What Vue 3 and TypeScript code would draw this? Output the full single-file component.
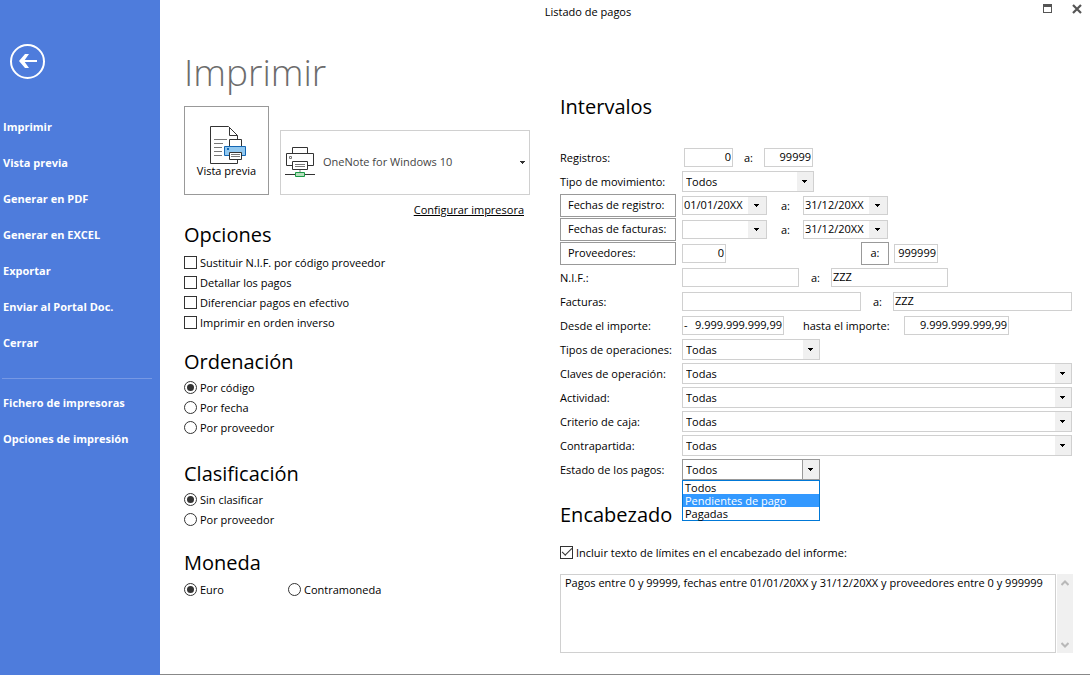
<script setup lang="ts">
import { ref } from 'vue'

interface Choice { id: string; text: string }

const mainLinks: string[] = ['Imprimir', 'Vista previa', 'Generar en PDF', 'Generar en EXCEL', 'Exportar', 'Enviar al Portal Doc.', 'Cerrar']
const setupLinks: string[] = ['Fichero de impresoras', 'Opciones de impresión']

const printOptions: Choice[] = [
  { id: 'nif', text: 'Sustituir N.I.F. por código proveedor' },
  { id: 'detalle', text: 'Detallar los pagos' },
  { id: 'efectivo', text: 'Diferenciar pagos en efectivo' },
  { id: 'inverso', text: 'Imprimir en orden inverso' },
]
const checkedOptions = ref<string[]>([])

const radioGroups = [
  { name: 'orden', title: 'Ordenación', choices: ['Por código', 'Por fecha', 'Por proveedor'] },
  { name: 'clase', title: 'Clasificación', choices: ['Sin clasificar', 'Por proveedor'] },
  { name: 'moneda', title: 'Moneda', choices: ['Euro', 'Contramoneda'] },
]
const picked = ref<Record<string, string>>({ orden: 'Por código', clase: 'Sin clasificar', moneda: 'Euro' })

const wideSelects: Choice[] = [
  { id: 'claves', text: 'Claves de operación:' },
  { id: 'actividad', text: 'Actividad:' },
  { id: 'criterio', text: 'Criterio de caja:' },
  { id: 'contrapartida', text: 'Contrapartida:' },
]

const states: string[] = ['Todos', 'Pendientes de pago', 'Pagadas']
const state = ref('Todos')
const hovered = ref('Pendientes de pago')
const listOpen = ref(true)

// Stepped 5-3-1 pixel triangle shared by every drop-down
const arrow = 'M5 8h5v1H5zM6 9h3v1H6zM7 10h1v1H7z'

function chooseState(value: string): void {
  state.value = value
  listOpen.value = false
}

const includeLimits = ref(true)
const headerText = ref('Pagos entre 0 y 99999, fechas entre 01/01/20XX y 31/12/20XX y proveedores entre 0 y 999999')
</script>

<template>
  <div class="window">
    <aside class="sidebar">
      <button class="back" type="button" aria-label="Volver">
        <svg width="35" height="35" viewBox="0 0 35 35" fill="none" stroke="#fff">
          <circle cx="17.500" cy="17.500" r="16.500" stroke-width="2" />
          <path d="M11 17h16" stroke-width="2" />
          <path d="M9 17l6-7h4l-5 7 5 7h-4z" fill="#fff" stroke="none" />
        </svg>
      </button>
      <nav>
        <a v-for="link in mainLinks" :key="link" href="#">{{ link }}</a>
        <hr />
        <a v-for="link in setupLinks" :key="link" href="#">{{ link }}</a>
      </nav>
    </aside>

    <main class="main">
      <header class="titlebar">
        <span class="caption">Listado de pagos</span>
        <div class="controls">
          <button type="button" aria-label="Maximizar">
            <svg width="9" height="9" viewBox="0 0 9 9" shape-rendering="crispEdges">
              <path d="M0 0h9v9H0zM1 3v5h7V3z" fill="#555" fill-rule="evenodd" />
            </svg>
          </button>
          <button type="button" aria-label="Cerrar ventana">
            <svg width="10" height="10" viewBox="0 0 10 10">
              <path d="M1 1l8 8M9 1L1 9" stroke="#555" stroke-width="2.200" />
            </svg>
          </button>
        </div>
      </header>

      <div class="content">
        <section class="left">
          <h1>Imprimir</h1>
          <div class="printer-row">
            <button class="preview" type="button">
              <svg width="39" height="38" viewBox="-3 0 39 38" fill="none" stroke-width="1">
                <path d="M27.500 13V9.500L18.500 .5H.5v37h27V33" fill="#fff" stroke="#333" />
                <path d="M19.500 1v8.500h8" stroke="#333" />
                <path d="M4 13.500h13M4 17.500h9M4 21.500h8M4 25.500h8M4 29.500h8" stroke="#777" />
                <path d="M19.500 20v-6.500h12V20" fill="#fff" stroke="#333" />
                <path d="M14.500 20.500h21v9h-21z" fill="#91c8f0" stroke="#1467b3" />
                <path d="M17 22h2v2h-2z" fill="#1467b3" />
                <path d="M19.500 26.500h12v7h-12z" fill="#fff" stroke="#333" />
                <path d="M21 28.500h9M21 30.500h9" stroke="#777" />
              </svg>
              <span>Vista previa</span>
            </button>
            <button class="printer" type="button" aria-haspopup="listbox">
              <svg width="30" height="31" viewBox="0 0 30 31" fill="none">
                <path d="M7.500 7V.5h15V7" stroke="#333" />
                <path d="M7 18.500H1.500v-12h27v12H23" fill="#fff" stroke="#333" />
                <path d="M4.500 9.500h2v2h-2z" stroke="#777" />
                <path d="M7.500 14.500h15v8h-15z" fill="#fff" stroke="#333" />
                <path d="M10 17.500h10M10 19.500h10" stroke="#777" />
                <path d="M15 23v2" stroke="#bbb" stroke-width="2" />
                <path d="M0 27.500h30" stroke="#333" />
                <path d="M10.500 25.500h9v4h-9z" fill="#b5e0bd" stroke="#1b9b46" />
              </svg>
              <span class="printer-name">OneNote for Windows 10</span>
              <svg width="5" height="3" viewBox="5 8 5 3" shape-rendering="crispEdges"><path :d="arrow" fill="#333" /></svg>
            </button>
          </div>
          <a class="configure" href="#">Configurar impresora</a>

          <fieldset class="opciones">
            <legend>Opciones</legend>
            <label v-for="option in printOptions" :key="option.id" class="tick">
              <input v-model="checkedOptions" type="checkbox" :value="option.id" /><span>{{ option.text }}</span>
            </label>
          </fieldset>

          <fieldset v-for="group in radioGroups" :key="group.name" :class="group.name">
            <legend>{{ group.title }}</legend>
            <div class="choices">
              <label v-for="choice in group.choices" :key="choice" class="tick">
                <input v-model="picked[group.name]" type="radio" :name="group.name" :value="choice" /><span>{{ choice }}</span>
              </label>
            </div>
          </fieldset>
        </section>

        <section class="right">
          <h2>Intervalos</h2>
          <div class="rows">
            <div class="row inset">
              <label class="name" for="reg-from">Registros:</label>
              <input id="reg-from" class="field number short" type="text" value="0" />
              <label class="to tight" for="reg-to">a:</label>
              <input id="reg-to" class="field number short" type="text" value="99999" />
            </div>
            <div class="row">
              <label class="name" for="tipo">Tipo de movimiento:</label>
              <span class="combo kind">
                <select id="tipo"><option>Todos</option></select>
                <svg viewBox="0 0 16 19"><path :d="arrow" /></svg>
              </span>
            </div>
            <div class="row">
              <button class="name boxed" type="button">Fechas de registro:</button>
              <span class="date">
                <input type="text" value="01/01/20XX" aria-label="Fecha de registro inicial" />
                <button type="button" aria-label="Abrir calendario"><svg viewBox="-1 1 18 17"><path :d="arrow" /></svg></button>
              </span>
              <label class="to" for="freg-to">a:</label>
              <span class="date">
                <input id="freg-to" type="text" value="31/12/20XX" />
                <button type="button" aria-label="Abrir calendario"><svg viewBox="-1 1 18 17"><path :d="arrow" /></svg></button>
              </span>
            </div>
            <div class="row">
              <button class="name boxed" type="button">Fechas de facturas:</button>
              <span class="date">
                <input type="text" value="" aria-label="Fecha de factura inicial" />
                <button type="button" aria-label="Abrir calendario"><svg viewBox="-1 1 18 17"><path :d="arrow" /></svg></button>
              </span>
              <label class="to" for="ffac-to">a:</label>
              <span class="date">
                <input id="ffac-to" type="text" value="31/12/20XX" />
                <button type="button" aria-label="Abrir calendario"><svg viewBox="-1 1 18 17"><path :d="arrow" /></svg></button>
              </span>
            </div>
            <div class="row">
              <button class="name boxed" type="button">Proveedores:</button>
              <div class="suppliers">
                <input class="field number code" type="text" value="0" aria-label="Proveedor inicial" />
                <button class="boxed until" type="button">a:</button>
              </div>
              <input class="field number code" type="text" value="999999" aria-label="Proveedor final" />
            </div>
            <div class="row">
              <label class="name" for="nif-from">N.I.F.:</label>
              <input id="nif-from" class="field medium" type="text" value="" />
              <label class="to middle" for="nif-to">a:</label>
              <input id="nif-to" class="field medium" type="text" value="ZZZ" />
            </div>
            <div class="row">
              <label class="name" for="fac-from">Facturas:</label>
              <input id="fac-from" class="field stretch" type="text" value="" />
              <label class="to middle" for="fac-to">a:</label>
              <input id="fac-to" class="field stretch last" type="text" value="ZZZ" />
            </div>
            <div class="row">
              <label class="name" for="imp-from">Desde el importe:</label>
              <span class="field signed"><span>-</span><input id="imp-from" type="text" value="9.999.999.999,99" /></span>
              <label class="amount-to" for="imp-to">hasta el importe:</label>
              <input id="imp-to" class="field number amount" type="text" value="9.999.999.999,99" />
            </div>
            <div class="row">
              <label class="name" for="ops">Tipos de operaciones:</label>
              <span class="combo state">
                <select id="ops"><option>Todas</option></select>
                <svg viewBox="0 0 16 19"><path :d="arrow" /></svg>
              </span>
            </div>
            <div v-for="item in wideSelects" :key="item.id" class="row">
              <label class="name" :for="item.id">{{ item.text }}</label>
              <span class="combo stretch">
                <select :id="item.id"><option>Todas</option></select>
                <svg viewBox="0 0 16 19"><path :d="arrow" /></svg>
              </span>
            </div>
            <div class="row">
              <label class="name" for="estado">Estado de los pagos:</label>
              <span class="combo state open">
                <select id="estado" v-model="state" @mousedown.prevent="listOpen = !listOpen">
                  <option v-for="value in states" :key="value">{{ value }}</option>
                </select>
                <svg viewBox="0 0 16 19"><path :d="arrow" /></svg>
                <ul v-if="listOpen" role="listbox" aria-label="Estado de los pagos">
                  <li
                    v-for="value in states"
                    :key="value"
                    role="option"
                    :aria-selected="value === hovered"
                    :class="{ active: value === hovered }"
                    @mouseenter="hovered = value"
                    @click="chooseState(value)"
                  >{{ value }}</li>
                </ul>
              </span>
            </div>
          </div>

          <h2>Encabezado</h2>
          <label class="tick limits">
            <input v-model="includeLimits" type="checkbox" /><span>Incluir texto de límites en el encabezado del informe:</span>
          </label>
          <div class="memo">
            <textarea v-model="headerText" aria-label="Texto del encabezado"></textarea>
            <div class="scroll" aria-hidden="true">
              <svg width="8" height="6" viewBox="0 0 8 6"><path d="M.5 5L4 1.500 7.500 5" /></svg>
              <svg width="8" height="6" viewBox="0 0 8 6"><path d="M.5 1L4 4.500 7.500 1" /></svg>
            </div>
          </div>
        </section>
      </div>
    </main>
  </div>
</template>

<style>
body {
  margin: 0;
  background: #fff;
}
</style>

<style scoped>
* {
  box-sizing: border-box;
}

.window {
  display: grid;
  grid-template-columns: 160px 1fr;
  min-height: 100vh;
  color: #000;
  font: 11px/20px "Open Sans", "Noto Sans", sans-serif;
}

button,
input,
select,
textarea {
  margin: 0;
  padding: 0;
  border: 0;
  border-radius: 0;
  outline: 0;
  background: #fff;
  color: inherit;
  font: inherit;
}

a {
  color: inherit;
  text-decoration: none;
}

svg {
  display: block;
  flex: none;
}

/* Sidebar */
.sidebar {
  padding-top: 44px;
  background: #4e7cdc;
  color: #fff;
}

.back {
  display: block;
  margin: 0 0 30px 10px;
  background: none;
}

nav a {
  display: block;
  padding-left: 3px;
  font-weight: 700;
  line-height: 36px;
}

nav hr {
  height: 1px;
  margin: 17px 8px 6px 2px;
  border: 0;
  background: #7698e4;
}

/* Title bar */
.main {
  display: flex;
  flex-direction: column;
  min-width: 0;
  border-bottom: 1px solid #888;
}

.titlebar {
  display: flex;
  height: 24px;
}

.caption {
  flex: 1;
  line-height: 24px;
  text-align: center;
}

.controls {
  display: flex;
  align-items: flex-start;
  justify-content: flex-end;
  gap: 20px;
  width: 74px;
  padding: 4px 8px 0 0;
}

.controls button {
  background: none;
}

/* Page */
.content {
  display: grid;
  grid-template-columns: 346px 1fr;
  gap: 30px;
  padding: 26px 17px 20px 24px;
}

h1 {
  margin: 0 0 12px;
  color: #6c6c6c;
  font-size: 37px;
  font-weight: 300;
  line-height: 44px;
}

h2,
legend {
  margin: 0;
  padding: 0;
  font-size: 20px;
  font-weight: 400;
  line-height: 30px;
}

.printer-row {
  display: flex;
  align-items: flex-end;
  gap: 11px;
}

.preview {
  display: flex;
  flex-direction: column;
  align-items: center;
  width: 85px;
  height: 89px;
  padding-top: 19px;
  border: 1px solid #999;
  line-height: 14px;
}

.printer {
  display: flex;
  flex: 1;
  align-items: center;
  height: 65px;
  padding: 0 4px;
  border: 1px solid #d0d0d0;
  color: #444;
}

.printer-name {
  flex: 1;
  padding: 0 0 2px 8px;
  text-align: left;
}

.configure {
  display: block;
  margin: 5px 6px 0 0;
  text-align: right;
  text-decoration: underline;
}

fieldset {
  min-width: 0;
  margin: 0;
  padding: 0;
  border: 0;
}

.opciones legend {
  padding-bottom: 2px;
}

.orden {
  margin-top: 15px;
}

.clase {
  margin-top: 22px;
}

.moneda {
  margin-top: 19px;
}

.moneda legend {
  padding-bottom: 1px;
}

.moneda .choices {
  display: grid;
  grid-template-columns: 104px 1fr;
}

.tick {
  display: flex;
  align-items: center;
  gap: 3px;
  height: 20px;
}

.tick span {
  padding-top: 2px;
}

.tick input {
  appearance: none;
  display: grid;
  flex: none;
  place-items: center;
  width: 13px;
  height: 13px;
  border: 1px solid #333;
}

.tick input[type="radio"] {
  border-radius: 50%;
}

.tick input[type="radio"]:checked::after {
  content: "";
  width: 7px;
  height: 7px;
  border-radius: 50%;
  background: #333;
}

.tick input[type="checkbox"]:checked::after {
  content: "";
  width: 9px;
  height: 4px;
  margin-bottom: 3px;
  border: solid #333;
  border-width: 0 0 1px 1px;
  transform: rotate(-45deg);
}

/* Ranges */
.right {
  min-width: 0;
  padding-top: 42px;
}

.rows {
  margin: 23px 1px 19px 0;
}

.row {
  display: flex;
  align-items: center;
  height: 24px;
}

.row label {
  padding-top: 2px;
}

.name {
  flex: none;
  width: 116px;
  margin-right: 6px;
  white-space: nowrap;
}

.inset .name {
  margin-right: 8px;
}

.boxed {
  height: 23px;
  border: 1px solid #999;
  line-height: 20px;
}

.name.boxed {
  padding-left: 7px;
  text-align: left;
}

.field,
.date {
  flex: none;
  height: 19px;
  padding: 0 1px 2px;
  border: 1px solid #d0d0d0;
  line-height: 15px;
}

.number {
  text-align: right;
}

.short {
  width: 49px;
}

.code {
  width: 44px;
}

.medium {
  width: 117px;
}

.amount {
  width: 105px;
}

.stretch {
  flex: 1 1 0;
  width: 0;
}

.last {
  flex-basis: 4px;
}

.signed {
  display: flex;
  width: 102px;
}

.signed input {
  flex: 1;
  width: 0;
  text-align: right;
}

.date {
  display: flex;
  width: 85px;
  padding: 0 0 0 1px;
}

.date input {
  flex: 1;
  width: 0;
  padding-bottom: 2px;
}

.date button {
  width: 18px;
  background: #f0f0f0;
}

.row .to {
  width: 36px;
  padding-left: 14px;
}

.row .tight {
  width: 31px;
  padding-left: 11px;
}

.row .middle {
  width: 32px;
  padding-left: 12px;
}

.amount-to {
  width: 120px;
  padding-left: 19px;
}

.suppliers {
  display: flex;
  align-items: center;
  justify-content: space-between;
  width: 207px;
  margin-right: 5px;
}

.until {
  width: 28px;
}

.combo {
  position: relative;
  display: flex;
  height: 21px;
  border: 1px solid #d0d0d0;
}

.combo select {
  appearance: none;
  flex: 1;
  width: 0;
  padding-left: 3px;
}

.row svg {
  shape-rendering: crispEdges;
}

.combo svg {
  width: 16px;
  height: 19px;
  background: #f0f0f0;
  pointer-events: none;
}

.kind {
  width: 132px;
}

.state {
  width: 138px;
}

.open {
  border-color: #999;
}

.open svg {
  box-shadow: -1px 0 #999;
}

.combo ul {
  position: absolute;
  z-index: 1;
  top: 20px;
  right: -1px;
  left: -1px;
  margin: 0;
  padding: 0;
  border: 1px solid #0078d7;
  background: #fff;
  list-style: none;
  line-height: 13px;
}

.combo li {
  padding-left: 2px;
}

.combo .active {
  background: #3399ff;
  color: #fff;
}

/* Header text */
.limits {
  margin: 12px 0;
}

.memo {
  display: flex;
  gap: 1px;
  height: 79px;
}

.memo textarea {
  flex: 1;
  min-width: 0;
  padding: 0 4px;
  border: 1px solid #d0d0d0;
  line-height: 16px;
  resize: none;
}

.scroll {
  display: flex;
  flex-direction: column;
  align-items: center;
  justify-content: space-between;
  width: 16px;
  padding: 6px 0 5px;
  background: #f0f0f0;
}

.scroll path {
  fill: none;
  stroke: #b8b8b8;
  stroke-width: 2;
}
</style>
